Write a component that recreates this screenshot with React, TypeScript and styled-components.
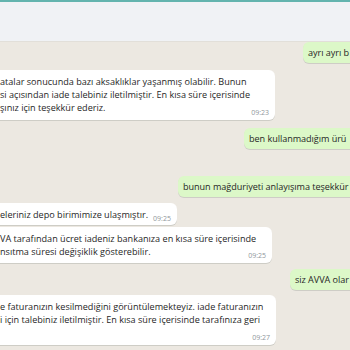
import React from "react";
import styled, { createGlobalStyle } from "styled-components";

const GlobalStyle = createGlobalStyle`
  html, body {
    margin: 0;
    padding: 0;
  }
  body {
    font-family: "Open Sans", "Noto Sans", sans-serif;
    background: #ece8e1;
  }
`;

const Screen = styled.div`
  width: 350px;
  height: 350px;
  overflow: hidden;
  display: flex;
  flex-direction: column;
  background: #ece8e1;
`;

const TopLine = styled.div`
  height: 2px;
  flex-shrink: 0;
  background: #63b4ae;
`;

const Header = styled.div`
  height: 39px;
  flex-shrink: 0;
  background: #f0f2f5;
  border-bottom: 1px solid #e2dfd9;
`;

const Chat = styled.div`
  display: flex;
  flex-direction: column;
`;

// incoming rows start at the left edge, outgoing rows run into the right edge
const Row = styled.div<{ $top: number; $indent?: number }>`
  display: flex;
  margin-top: ${(p) => p.$top}px;
  padding-left: ${(p) => p.$indent ?? 0}px;
`;

const OutBubble = styled.div`
  flex: 1;
  min-width: 0;
  overflow: hidden;
  background: #dcf8c8;
  border-radius: 6px 0 0 6px;
  box-shadow: 0 1px 0.5px rgba(11, 20, 26, 0.13);
  padding: 4px 0 4px 5px;
  font-size: 9.1px;
  line-height: 13px;
  letter-spacing: -0.05px;
  color: #262626;
  white-space: nowrap;
`;

const InBubble = styled.div<{ $width?: number }>`
  width: ${(p) => (p.$width ? `${p.$width}px` : "auto")};
  box-sizing: border-box;
  background: #ffffff;
  border-radius: 0 6px 6px 0;
  box-shadow: 0 1px 0.5px rgba(11, 20, 26, 0.13);
  padding: 5px 6px 3px 0;
  font-size: 9.1px;
  line-height: 13px;
  color: #262626;
  white-space: nowrap;
`;

const Line = styled.div``;

const InlineLine = styled.div`
  display: flex;
  align-items: flex-end;
  gap: 5px;
  padding-bottom: 1px;
`;

const Time = styled.div<{ $shift: number }>`
  text-align: right;
  font-size: 7px;
  line-height: 9px;
  color: #8f979b;
  margin-top: ${(p) => p.$shift}px;
`;

const InlineTime = styled.span`
  font-size: 7px;
  line-height: 9px;
  color: #8f979b;
  margin-bottom: -2px;
`;

export default function App() {
  return (
    <Screen>
      <GlobalStyle />
      <TopLine />
      <Header />
      <Chat>
        <Row $top={0} $indent={303}>
          <OutBubble>ayrı ayrı b</OutBubble>
        </Row>

        <Row $top={7}>
          <InBubble $width={275}>
            <Line>atalar sonucunda bazı aksaklıklar yaşanmış olabilir. Bunun</Line>
            <Line>si açısından iade talebiniz iletilmiştir. En kısa süre içerisinde</Line>
            <Line>şınız için teşekkür ederiz.</Line>
            <Time $shift={-6}>09:23</Time>
          </InBubble>
        </Row>

        <Row $top={8} $indent={244}>
          <OutBubble>ben kullanmadığım ürü</OutBubble>
        </Row>

        <Row $top={27} $indent={178}>
          <OutBubble>bunun mağduriyeti anlayışıma teşekkür</OutBubble>
        </Row>

        <Row $top={6}>
          <InBubble>
            <InlineLine>
              <span>eleriniz depo birimimize ulaşmıştır.</span>
              <InlineTime>09:25</InlineTime>
            </InlineLine>
          </InBubble>
        </Row>

        <Row $top={2}>
          <InBubble $width={272}>
            <Line>VA tarafından ücret iadeniz bankanıza en kısa süre içerisinde</Line>
            <Line>nsıtma süresi değişiklik gösterebilir.</Line>
            <Time $shift={-7}>09:25</Time>
          </InBubble>
        </Row>

        <Row $top={6} $indent={290}>
          <OutBubble>siz AVVA olar</OutBubble>
        </Row>

        <Row $top={5}>
          <InBubble $width={276}>
            <Line>e faturanızın kesilmediğini görüntülemekteyiz. iade faturanızın</Line>
            <Line>i için talebiniz iletilmiştir. En kısa süre içerisinde tarafınıza geri</Line>
            <Time $shift={7}>09:27</Time>
          </InBubble>
        </Row>
      </Chat>
    </Screen>
  );
}
